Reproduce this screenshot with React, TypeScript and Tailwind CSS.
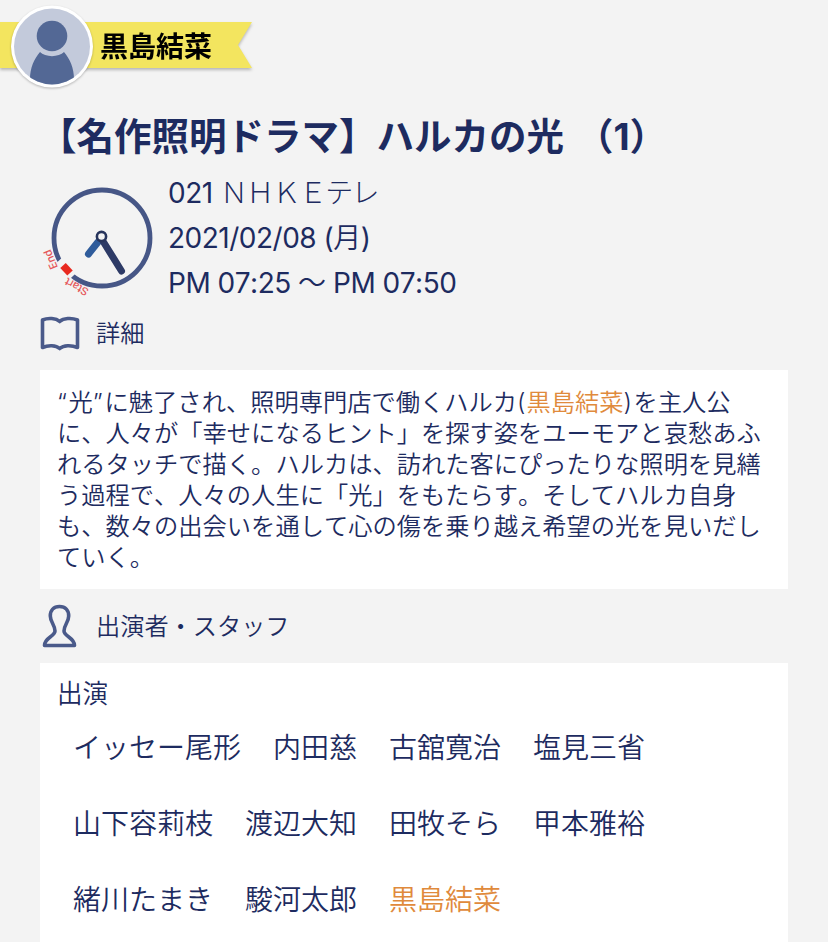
import type { ReactNode } from 'react';

const castRows: string[][] = [
  ['イッセー尾形', '内田慈', '古舘寛治', '塩見三省'],
  ['山下容莉枝', '渡辺大知', '田牧そら', '甲本雅裕'],
  ['緒川たまき', '駿河太郎', '黒島結菜'],
];

const highlighted = '黒島結菜';

function Avatar() {
  return (
    <svg className="absolute left-[9px] top-[4px] h-[86px] w-[86px] drop-shadow-[0_1px_1px_rgba(0,0,0,0.25)]" viewBox="9 4 86 86">
      <defs>
        <clipPath id="face">
          <circle cx="52" cy="46.5" r="38" />
        </clipPath>
      </defs>
      <circle cx="52" cy="46.5" r="41" fill="#fff" />
      <circle cx="52" cy="46.5" r="38" fill="#c3cadb" />
      <g clipPath="url(#face)" fill="#536895">
        <circle cx="52" cy="36" r="15.3" />
        <path d="M40 52C45 57.5 59 57.5 64 52C70 59 74 68 74 79V90H30V79C30 68 34 59 40 52Z" />
      </g>
    </svg>
  );
}

function Clock() {
  return (
    <svg className="h-[130px] w-[130px] shrink-0" viewBox="36 175 130 130" fill="none">
      <circle cx="102" cy="238" r="48" stroke="#465686" strokeWidth="4.8" />
      <path d="M58.5 261L73 276" stroke="#f3f3f3" strokeWidth="11" />
      <path d="M63 265.5L70 273" stroke="#e8291f" strokeWidth="7.5" />
      <path d="M98 242L88.5 254" stroke="#2f5c9b" strokeWidth="7" strokeLinecap="round" />
      <path d="M103.500 242L121.500 271" stroke="#2d3a66" strokeWidth="7" strokeLinecap="round" />
      <circle cx="101.500" cy="236.500" r="4.600" fill="#f3f3f3" stroke="#27345c" strokeWidth="2.600" />
      <g fill="#e5575a" fontSize="11" fontFamily="Inter, sans-serif" fontWeight="500" textAnchor="middle">
        <text transform="translate(50.500 259.500) rotate(247)" dy="4">End</text>
        <text transform="translate(76.500 287) rotate(209)" dy="4">Start</text>
      </g>
    </svg>
  );
}

function BookIcon() {
  return (
    <svg className="h-[36px] w-[40px]" viewBox="40 315 40 36" fill="none" stroke="#4a5a8a" strokeWidth="3.600" strokeLinejoin="round">
      <path d="M42.500 320C48 317.500 56 318 59.700 321.500C63.500 318 71.500 317.500 77.500 320V347.500C71.500 345 63.500 345 59.700 348.500C56 345 48 345 42.500 347.500Z" />
    </svg>
  );
}

function PersonIcon() {
  return (
    <svg className="h-[46px] w-[40px]" viewBox="40 603 40 46" fill="none" stroke="#4a5a8a" strokeWidth="3.600" strokeLinejoin="round">
      <path d="M59.500 606.500C53.500 606.500 50.300 610.500 50.300 616C50.300 622 55 625 55 631C55 636.500 44.500 637.500 44.500 645.500H74.500C74.500 637.500 64 636.500 64 631C64 625 68.700 622 68.700 616C68.700 610.500 65.500 606.500 59.500 606.500Z" />
    </svg>
  );
}

function SectionHeading({ icon, children }: { icon: ReactNode; children: ReactNode }) {
  return (
    <div className="flex items-center gap-4 pl-10">
      {icon}
      <h2 className="pt-[2px] text-[24.2px] leading-[34px] font-[350]">{children}</h2>
    </div>
  );
}

export default function App() {
  return (
    <main lang="ja" className="h-[942px] w-[828px] overflow-hidden bg-[#f3f3f3] font-['Inter','Noto_Sans_CJK_JP',sans-serif] text-[#1d2b60] [font-kerning:none]">
      <header className="relative h-[92px] pt-[22px]">
        <div className="w-[252px] drop-shadow-[0_2px_1.5px_rgba(0,0,0,0.25)]">
          <div className="flex h-[46px] items-center bg-[#f3e55f] pt-[4px] pl-[100px] text-[28px] leading-[42px] font-bold text-black [clip-path:polygon(0_0,100%_0,238px_50%,100%_100%,0_100%)]">
            黒島結菜
          </div>
        </div>
        <Avatar />
      </header>

      <h1 className="mt-[19px] h-[52px] pl-[39px] text-[37.5px] leading-[52px] font-bold whitespace-nowrap">
        【名作照明ドラマ】ハルカの<span className="tracking-[3px]">光</span> （1）
      </h1>

      <section className="flex h-[142px] pt-[8px] pl-[36px]">
        <div className="pt-[4px]">
          <Clock />
        </div>
        <div className="pl-[2px] text-[28px] leading-[45px] font-normal tracking-[-0.5px] whitespace-nowrap">
          <p>021 <span className="font-light tracking-[-1.7px]">ＮＨＫＥテレ</span></p>
          <p>2021/02/08 (<span className="font-[350]">月</span>)</p>
          <p>PM 07:25 <span className="font-[350]">〜</span> PM 07:50</p>
        </div>
      </section>

      <div className="flex h-[65px] items-start pt-[10px]">
        <SectionHeading icon={<BookIcon />}>詳細</SectionHeading>
      </div>

      <p className="mx-10 h-[219px] bg-white pt-[17px] pl-[17px] text-[24.28px] leading-[31px] font-[350] whitespace-nowrap">
        <span className="tracking-[1.5px]">“</span>光<span className="tracking-[2px]">”</span>に魅了され、照明専門店で働くハルカ<span className="tracking-[1px]">(</span><a className="text-[#e08a3c]">黒島結菜</a><span className="tracking-[1.5px]">)</span>を主人公
        <br />
        に、人々が「幸せになるヒント」を探す姿をユーモアと哀愁あふ
        <br />
        れるタッチで描く。ハルカは、訪れた客にぴったりな照明を見繕
        <br />
        う過程で、人々の人生に「光」をもたらす。そしてハルカ自身
        <br />
        も、数々の出会いを通して心の傷を乗り越え希望の光を見いだし
        <br />
        ていく。
      </p>

      <div className="flex h-[74px] items-start pt-[14px]">
        <SectionHeading icon={<PersonIcon />}>出演者・スタッフ</SectionHeading>
      </div>

      <section className="mx-10 h-[279px] bg-white pt-[14px] pl-[17px] font-[350]">
        <h3 className="h-[33px] text-[25.6px] leading-[34px]">出演</h3>
        <div className="pl-[16px]">
          {castRows.map((row) => (
            <ul key={row[0]} className="flex h-[76px] items-center gap-8 text-[28px] leading-[42px] whitespace-nowrap">
              {row.map((name) => (
                <li key={name} className={name === highlighted ? 'text-[#e08a3c]' : ''}>
                  {name}
                </li>
              ))}
            </ul>
          ))}
        </div>
      </section>
    </main>
  );
}
